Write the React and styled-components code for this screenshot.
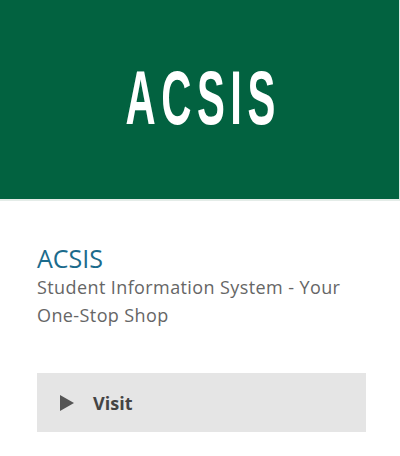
import React from "react";
import styled, { createGlobalStyle } from "styled-components";

const GlobalStyle = createGlobalStyle`
  body {
    margin: 0;
    background: #fff;
  }
`;

const Card = styled.div`
  width: 400px;
  display: flex;
  flex-direction: column;
`;

const Banner = styled.div`
  height: 199px;
  width: 399px;
  background: #026240;
  border-right: 1px solid #dfe9e4;
  border-bottom: 2px solid #e4ece8;
  display: flex;
  align-items: center;
  justify-content: center;
`;

const BannerText = styled.div`
  font-family: "Liberation Sans", Arial, sans-serif;
  font-weight: 700;
  font-size: 76px;
  letter-spacing: 10px;
  color: #fff;
  line-height: 1;
  margin-top: -4px;
  margin-left: 8px;
  transform: scaleX(0.55);
`;

const Body = styled.div`
  padding: 42px 37px 0 37px;
  display: flex;
  flex-direction: column;
`;

const Title = styled.h2`
  margin: 0;
  font-family: "Open Sans", sans-serif;
  font-weight: 400;
  font-size: 25px;
  line-height: 30px;
  color: #1b6b8c;
`;

const Desc = styled.p`
  margin: 0;
  font-family: "Open Sans", sans-serif;
  font-size: 18px;
  letter-spacing: 0.4px;
  line-height: 28px;
  color: #666;
`;

const VisitButton = styled.a`
  margin-top: 44px;
  width: 329px;
  height: 59px;
  background: #e5e5e5;
  display: flex;
  align-items: center;
  padding-left: 23px;
  box-sizing: border-box;
  gap: 19px;
  font-family: "Open Sans", sans-serif;
  font-weight: 700;
  font-size: 18px;
  color: #444;
  text-decoration: none;
`;

const Arrow = styled.span`
  width: 0;
  height: 0;
  border-top: 8px solid transparent;
  border-bottom: 8px solid transparent;
  border-left: 14px solid #555;
`;

export default function App() {
  return (
    <Card>
      <GlobalStyle />
      <Banner>
        <BannerText>ACSIS</BannerText>
      </Banner>
      <Body>
        <Title>ACSIS</Title>
        <Desc>
          Student Information System - Your
          <br />
          One-Stop Shop
        </Desc>
        <VisitButton href="#">
          <Arrow />
          Visit
        </VisitButton>
      </Body>
    </Card>
  );
}
